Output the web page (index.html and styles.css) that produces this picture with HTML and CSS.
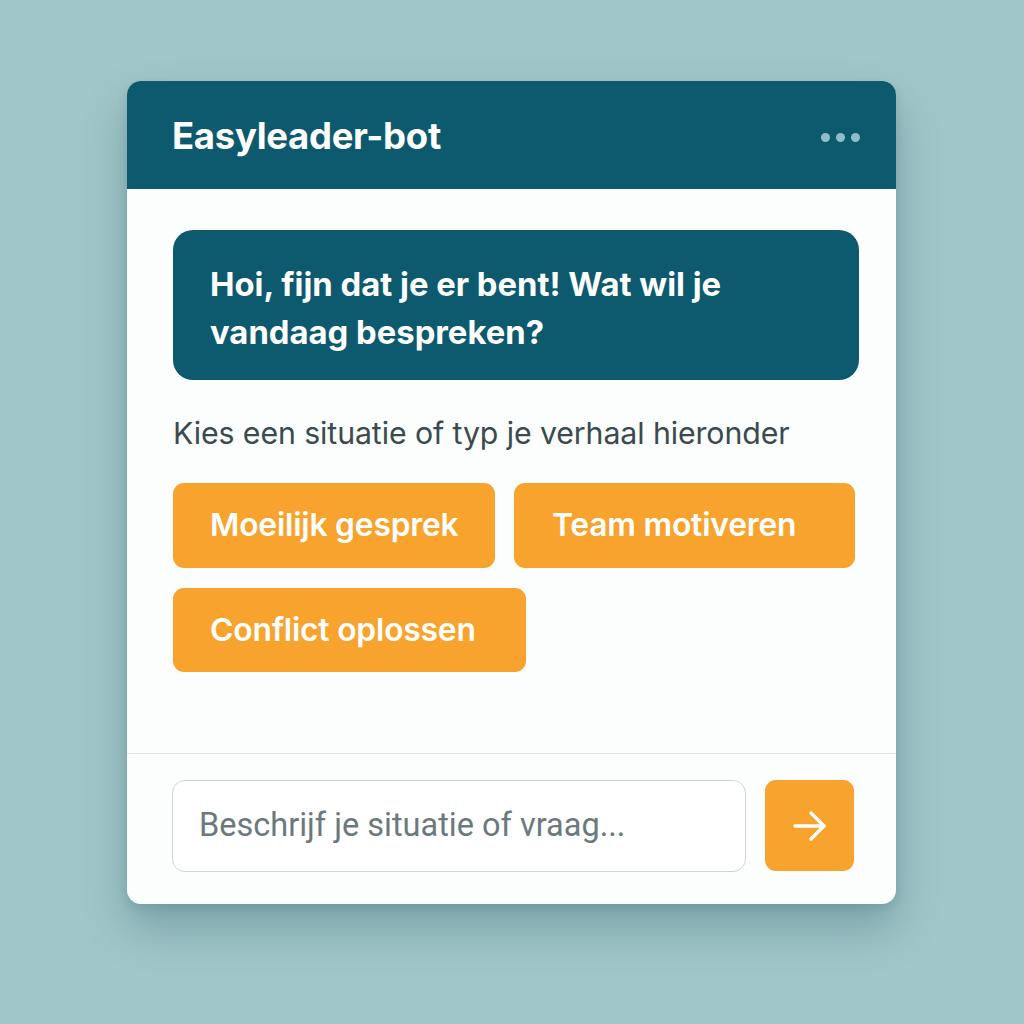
FILE: index.html
```html
<!DOCTYPE html>
<html lang="nl">
<head>
<meta charset="utf-8">
<title>Easyleader-bot</title>
<link rel="stylesheet" href="styles.css">
</head>
<body>
<div class="page">
  <div class="card">
    <div class="header">
      <h1 class="title">Easyleader-bot</h1>
      <div class="dots"><span></span><span></span><span></span></div>
    </div>
    <div class="body">
      <div class="bubble">Hoi, fijn dat je er bent! Wat wil je vandaag bespreken?</div>
      <p class="hint">Kies een situatie of typ je verhaal hieronder</p>
      <div class="options">
        <button class="opt opt-1">Moeilijk gesprek</button>
        <button class="opt opt-2">Team motiveren</button>
        <button class="opt opt-3">Conflict oplossen</button>
      </div>
    </div>
    <div class="footer">
      <div class="input">Beschrijf je situatie of vraag...</div>
      <button class="send" aria-label="Verstuur">
        <svg width="40" height="40" viewBox="0 0 40 40" fill="none" stroke="#fff" stroke-width="3.4" stroke-linecap="round" stroke-linejoin="round">
          <path d="M5 20h29"/>
          <path d="M21 7l13 13-13 13"/>
        </svg>
      </button>
    </div>
  </div>
</div>
</body>
</html>
```
FILE: styles.css
```css
* { box-sizing: border-box; }
html, body { margin: 0; padding: 0; }
body {
  background: #a1c6ca;
  font-family: Inter, "Noto Sans", "Liberation Sans", sans-serif;
  width: 1024px;
  height: 1024px;
  overflow: hidden;
}
.page {
  padding: 81px 0 0 127px;
}
.card {
  width: 769px;
  height: 823px;
  background: #fcfdfd;
  border-radius: 14px;
  overflow: hidden;
  display: flex;
  flex-direction: column;
  box-shadow: 0 24px 44px rgba(40, 90, 95, 0.33), 0 4px 10px rgba(40, 90, 95, 0.15);
}
.header {
  height: 108px;
  background: #0d596d;
  display: flex;
  align-items: center;
  justify-content: space-between;
  padding: 2px 36px 0 45px;
  flex-shrink: 0;
}
.title {
  margin: 0;
  color: #fff;
  font-size: 36.5px;
  font-weight: 700;
  letter-spacing: -0.3px;
}
.dots {
  display: flex;
  gap: 6px;
  margin-top: 3px;
}
.dots span {
  width: 9px;
  height: 9px;
  border-radius: 50%;
  background: #8dbfc8;
}
.body {
  flex: 1;
  padding: 41px 37px 0 46px;
  border-bottom: 1.5px solid #e1e6e7;
}
.bubble {
  background: #0d596d;
  color: #fff;
  border-radius: 20px;
  height: 150px;
  padding: 30px 60px 0 37px;
  font-size: 32.8px;
  font-weight: 700;
  line-height: 48px;
  letter-spacing: 0;
}
.hint {
  margin: 35px 0 0 0;
  color: #3b4a4f;
  font-size: 30.3px;
  line-height: 36px;
  letter-spacing: -0.1px;
}
.options {
  display: flex;
  flex-wrap: wrap;
  column-gap: 19px;
  row-gap: 20px;
  margin-top: 32px;
}
.opt {
  height: 85px;
  border: none;
  border-radius: 11px;
  background: #f8a32d;
  color: #fff;
  font-family: inherit;
  font-size: 31.8px;
  font-weight: 600;
  text-align: left;
  padding: 0 0 2px 37px;
  letter-spacing: -0.2px;
}
.opt-1 { width: 322px; }
.opt-2 { width: 341px; padding-left: 38px; }
.opt-3 { width: 353px; height: 84px; }
.footer {
  height: 150px;
  flex-shrink: 0;
  display: flex;
  gap: 19px;
  padding: 26px 42px 0 45px;
}
.input {
  flex: 1;
  height: 92px;
  background: #fff;
  border: 1.5px solid #c9d8d7;
  border-radius: 13px;
  display: flex;
  align-items: center;
  padding: 0 0 2px 26px;
  color: #6b797c;
  font-family: Roboto, Inter, sans-serif;
  font-size: 32.5px;
  letter-spacing: 0;
}
.send {
  width: 89px;
  height: 91px;
  border: none;
  border-radius: 11px;
  background: #f8a32d;
  display: flex;
  align-items: center;
  justify-content: center;
  padding: 0;
}
```
